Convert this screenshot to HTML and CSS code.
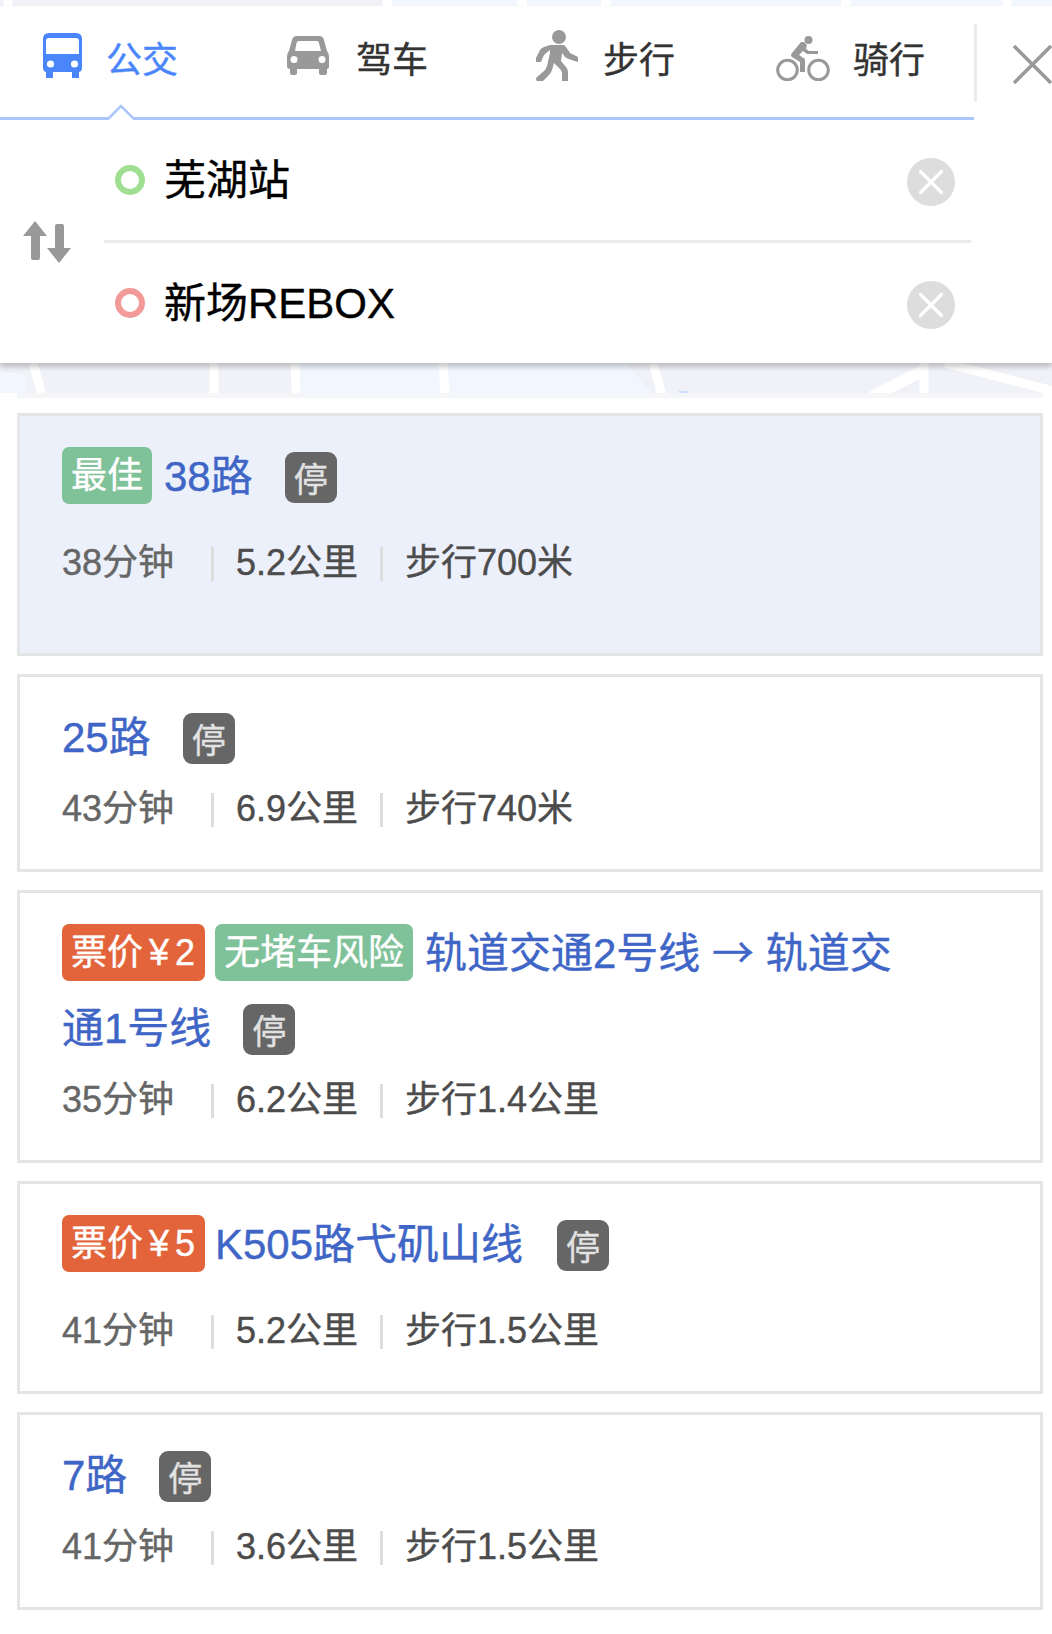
FILE: index.html
```html
<!DOCTYPE html>
<html lang="zh-CN">
<head>
  <meta charset="UTF-8">
  <meta name="viewport" content="width=device-width, initial-scale=1.0">
  <title>路线查询</title>
  <link rel="stylesheet" href="styles.css">
</head>
<body>
  <svg class="map-top" width="1052" height="6" viewBox="0 0 1052 6">
    <rect width="385" height="6" fill="#f1f2f7"/>
    <rect x="385" width="667" height="6" fill="#f2f7ff"/>
    <path d="M8 0v6M387 0v6M522 0v6M606 0v6M846 0v6M1007 0v6" stroke="#fff" stroke-width="9"/>
  </svg>

  <div class="panel">
    <div class="panel-head">
      <div class="tabs">
        <div class="tab bus active">
          <svg width="39" height="45" viewBox="0 0 39 45">
            <path fill="#4a85fb" fill-rule="evenodd" d="M6 0h27q6 0 6 6v29q0 3-3 4v6h-7v-6H10v6H3v-6q-3-1-3-4V6q0-6 6-6zM6 5q-3 0-3 3v13h33V8q0-3-3-3z"/>
            <circle cx="7.5" cy="31" r="3.6" fill="#fff"/>
            <circle cx="31.5" cy="31" r="3.6" fill="#fff"/>
          </svg>
          <span>公交</span>
        </div>
        <div class="tab car">
          <svg width="42" height="39" viewBox="0 0 42 39">
            <path fill="#999" fill-rule="evenodd" d="M10 0h22q4 0 5 4l3 11q2 2 2 5v10q0 3-2 3v4q0 2-2 2h-4q-2 0-2-2v-4H10v4q0 2-2 2H5q-2 0-2-2v-4q-3 0-3-3V20q0-3 2-5L5 4q1-4 5-4zM12 5q-2 0-2.500 2L8 15h26L32 7q-.5-2-2.500-2z"/>
            <circle cx="7" cy="23.500" r="3.500" fill="#fff"/>
            <circle cx="35" cy="23.500" r="3.500" fill="#fff"/>
          </svg>
          <span>驾车</span>
        </div>
        <div class="tab walk">
          <svg width="42" height="51" viewBox="0 0 42 51">
            <circle cx="23" cy="7" r="7" fill="#999"/>
            <path fill="#999" d="M14 15h13q2 0 3 2l4 6 8 4v5q-11-3-13-5l-3-4-1 8 5 6q2 2 2 5v9h-6v-8q0-2-2-4l-6-6-2 7q-1 3-3 5l-6 6H1q-2-2 0-4l7-6q2-2 3-5l3-13v-3l-5 4q-2 2-4 8H0v-4l4-8q1-2 4-3z"/>
          </svg>
          <span>步行</span>
        </div>
        <div class="tab bike">
          <svg width="54" height="45" viewBox="0 0 54 45">
            <g fill="none" stroke="#999" stroke-width="3">
              <circle cx="11.500" cy="34" r="9.800"/>
              <circle cx="42.500" cy="34" r="9.800"/>
            </g>
            <circle cx="32.500" cy="4" r="4" fill="#999"/>
            <path fill="#999" d="M25 6h3l3 3-1 4 3 2h9v3H31l-4-3-4 4 6 4v13h-5V26l-8-5q-2-2 0-4z"/>
          </svg>
          <span>骑行</span>
        </div>
      </div>
      <div class="head-split"></div>
      <svg class="close" width="39" height="39" viewBox="0 0 39 39">
        <path d="M1 1l37 37M38 1L1 38" stroke="#999" stroke-width="3.600"/>
      </svg>
      <svg class="caret" width="28" height="16" viewBox="0 0 28 16">
        <path d="M1 16h26L14 2z" fill="#fff"/>
        <path d="M1 15L14 2l13 13" fill="none" stroke="#abc6fc" stroke-width="2.500"/>
      </svg>
    </div>

    <div class="route-input">
      <svg class="swap" width="48" height="42" viewBox="0 0 48 42">
        <path fill="#999" d="M12 0l12 15h-7v22q0 2-2 2h-5q-2 0-2-2V15H0zM36 42L24 27h8V5q0-2 2-2h5q2 0 2 2v22h7z"/>
      </svg>
      <div class="points">
        <div class="point">
          <i class="dot start"></i>
          <span class="name">芜湖站</span>
          <svg class="clear" width="48" height="48" viewBox="0 0 48 48">
            <circle cx="24" cy="24" r="24" fill="#ddd"/>
            <path d="M13.500 13.500l21 21M34.500 13.500l-21 21" stroke="#fff" stroke-width="3.200" stroke-linecap="round"/>
          </svg>
        </div>
        <div class="point">
          <i class="dot end"></i>
          <span class="name">新场REBOX</span>
          <svg class="clear" width="48" height="48" viewBox="0 0 48 48">
            <circle cx="24" cy="24" r="24" fill="#ddd"/>
            <path d="M13.500 13.500l21 21M34.500 13.500l-21 21" stroke="#fff" stroke-width="3.200" stroke-linecap="round"/>
          </svg>
        </div>
      </div>
    </div>
  </div>

  <svg class="map-strip" width="1052" height="30" viewBox="0 0 1052 30">
    <rect width="1052" height="30" fill="#f1f2f7"/>
    <path d="M0 10h20l6 6v14H0zM298 0h327l27 30H298z" fill="#f2f7ff"/>
    <g fill="none" stroke="#fff" stroke-width="9">
      <path d="M33 0l9 32M214 0v30M295 0l1 30M443 0l2 30M653 0l9 32M924 0v30M945 0l120 31"/>
      <path d="M872 34l52-27" stroke-width="12"/>
    </g>
    <path d="M680 27v2h8" fill="none" stroke="#cfdffc" stroke-width="2"/>
  </svg>

  <div class="list">
    <div class="card best">
      <div class="title"><span class="tag green">最佳</span>38路<span class="stop">停</span></div>
      <div class="info"><span class="time">38分钟</span><span class="dist">5.2公里</span><span class="foot">步行700米</span></div>
    </div>
    <div class="card">
      <div class="title">25路<span class="stop">停</span></div>
      <div class="info"><span class="time">43分钟</span><span class="dist">6.9公里</span><span class="foot">步行740米</span></div>
    </div>
    <div class="card">
      <div class="title"><span class="tag orange">票价 ¥ 2</span><span class="tag green">无堵车风险</span>轨道交通2号线 <span class="arrow">→</span> 轨道交通1号线<span class="stop">停</span></div>
      <div class="info"><span class="time">35分钟</span><span class="dist">6.2公里</span><span class="foot">步行1.4公里</span></div>
    </div>
    <div class="card tall">
      <div class="title"><span class="tag orange">票价 ¥ 5</span>K505路弋矶山线<span class="stop">停</span></div>
      <div class="info"><span class="time">41分钟</span><span class="dist">5.2公里</span><span class="foot">步行1.5公里</span></div>
    </div>
    <div class="card">
      <div class="title">7路<span class="stop">停</span></div>
      <div class="info"><span class="time">41分钟</span><span class="dist">3.6公里</span><span class="foot">步行1.5公里</span></div>
    </div>
  </div>
</body>
</html>
```
FILE: styles.css
```css
* {
  box-sizing: border-box;
}
body {
  margin: 0;
  background: #fff;
  font-family: "Liberation Sans", "Noto Sans CJK SC", sans-serif;
  -webkit-text-stroke: 0.4px;
  overflow: hidden;
}
svg {
  display: block;
  flex: none;
}

/* search panel */
.panel {
  position: relative;
  height: 357px;
  background: #fff;
  box-shadow: 0 4px 5px rgba(0, 0, 0, 0.22);
}
.panel-head {
  position: relative;
  display: flex;
  height: 114px;
}
.tabs {
  display: grid;
  grid-template-columns: 244px 249px 240px 198px;
  width: 974px;
  padding-left: 43px;
  border-bottom: 3px solid #abc6fc;
}
.tab {
  display: flex;
  align-items: flex-start;
  color: #333;
  font-size: 36px;
  line-height: 54px;
}
.tab span {
  margin-top: 28px;
}
.active {
  color: #4a85fb;
}
.bus svg {
  margin: 27px 24px 0 0;
}
.car svg {
  margin: 30px 27px 0 0;
}
.walk svg {
  margin: 24px 25px 0 0;
}
.bike svg {
  margin: 30px 23px 0 0;
}
.head-split {
  width: 3px;
  height: 78px;
  margin-top: 18px;
  background: #ebebeb;
}
.close {
  margin: 39px 0 0 36px;
}
.caret {
  position: absolute;
  left: 107px;
  bottom: 0;
}

.route-input {
  display: flex;
}
.swap {
  margin: 101px 33px 0 23px;
}
.points {
  width: 867px;
}
.point {
  display: flex;
  align-items: center;
  height: 123px;
  padding: 0 16px 3px 11px;
}
.point:first-child {
  border-bottom: 3px solid #ebebeb;
  padding-bottom: 0;
}
.dot {
  width: 30px;
  height: 30px;
  border: 6px solid #a0de92;
  border-radius: 50%;
}
.dot.end {
  border-color: #f29a98;
}
.name {
  flex: 1;
  margin: 2px 0 0 19px;
  color: #000;
  font-size: 42px;
  line-height: 60px;
}
.clear {
  margin-top: 3px;
}

/* route list */
.list {
  display: flex;
  flex-direction: column;
  gap: 18px;
  margin: 0 9px 0 17px;
  padding-top: 15px;
  border-top: 5px solid #f5f6f7;
}
.card {
  padding: 23px 42px 33px;
  border: 3px solid #e4e5e7;
}
.title {
  width: 850px;
  color: #3f66c6;
  font-size: 42px;
  line-height: 75px;
}
.tag {
  display: inline-block;
  height: 57px;
  margin-right: 10px;
  padding: 0 9px;
  border-radius: 7px;
  color: #fff;
  font-size: 36px;
  line-height: 58px;
  vertical-align: 3px;
  white-space: nowrap;
}
.green {
  margin-right: 12px;
  background: #7fc198;
}
.orange {
  width: 143px;
  background: #e3643a;
  word-spacing: -4px;
}
.arrow {
  font-family: "Noto Sans CJK SC", sans-serif;
  line-height: 1;
}
.stop {
  display: inline-block;
  width: 52px;
  height: 51px;
  margin-left: 32px;
  border-radius: 9px;
  background: #666;
  color: #e2e2e2;
  font-size: 34px;
  line-height: 56px;
  text-align: center;
  vertical-align: -1px;
}
.tall .stop {
  margin-left: 34px;
}
.info {
  display: flex;
  align-items: center;
  margin-top: 7px;
  color: #4c4c4c;
  font-size: 36px;
  line-height: 54px;
}
.time {
  width: 149px;
  color: #666;
}
.dist, .foot {
  display: flex;
  align-items: center;
}
.dist::before, .foot::before {
  content: "";
  width: 3px;
  height: 34px;
  margin: 2px 22px 0 0;
  background: #ddd;
}
.foot {
  margin-left: 22px;
}
.best {
  padding-bottom: 63px;
  background: #ecf0fa;
}
.best .info, .tall .info {
  margin-top: 22px;
}
```
